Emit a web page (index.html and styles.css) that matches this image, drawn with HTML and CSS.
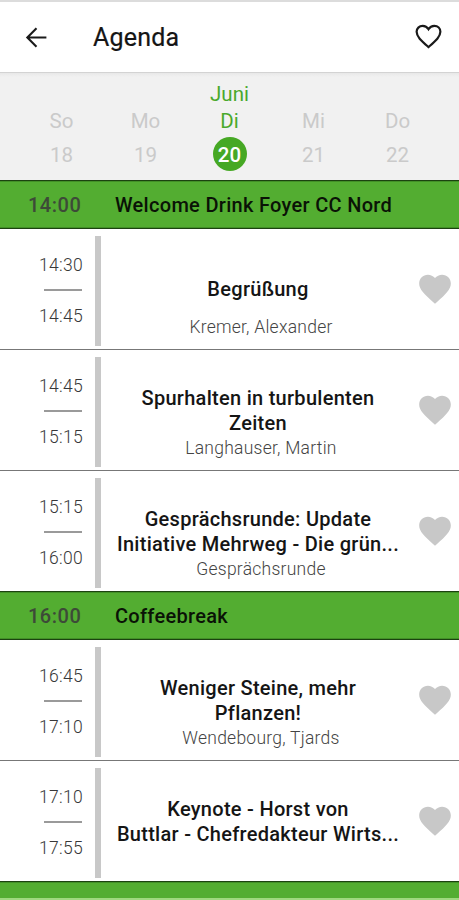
FILE: index.html
```html
<!DOCTYPE html>
<html lang="de">
<head>
<meta charset="UTF-8">
<meta name="viewport" content="width=device-width, initial-scale=1">
<title>Agenda</title>
<link rel="stylesheet" href="styles.css">
</head>
<body>

<svg class="symbole" width="0" height="0">
  <symbol id="herz" viewBox="0 0 24 24">
    <path d="M12 21.35l-1.45-1.32C5.4 15.36 2 12.28 2 8.5 2 5.42 4.42 3 7.5 3c1.74 0 3.41.81 4.5 2.09C13.09 3.81 14.76 3 16.5 3 19.58 3 22 5.42 22 8.5c0 3.78-3.4 6.86-8.55 11.54L12 21.35z"/>
  </symbol>
</svg>

<header class="kopf">
  <svg class="zurueck" viewBox="0 0 24 24"><path d="M21.5 12H3.5M12 3.2L3.2 12l8.8 8.8"/></svg>
  <h1>Agenda</h1>
  <svg class="merken" viewBox="0 0 24 24"><path d="M12 20.2C6.6 15.4 2.8 12.2 2.8 8.4 2.8 5.8 4.8 3.8 7.5 3.8c1.8 0 3.5 1 4.5 2.6 1-1.6 2.7-2.6 4.5-2.6 2.7 0 4.7 2 4.7 4.6 0 3.8-3.8 7-9.2 11.8z"/></svg>
</header>

<nav class="tage">
  <div class="tag"><span>So</span><span class="zahl">18</span></div>
  <div class="tag"><span>Mo</span><span class="zahl">19</span></div>
  <div class="tag aktiv"><span>Juni</span><span>Di</span><span class="zahl">20</span></div>
  <div class="tag"><span>Mi</span><span class="zahl">21</span></div>
  <div class="tag"><span>Do</span><span class="zahl">22</span></div>
</nav>

<main>
  <div class="pause"><time>14:00</time><h2>Welcome Drink Foyer CC Nord</h2></div>

  <div class="termin">
    <div class="zeit"><time>14:30</time><time>14:45</time></div>
    <div class="text einzeilig"><h3>Begrüßung</h3><p>Kremer, Alexander</p></div>
    <svg class="herz"><use href="#herz"/></svg>
  </div>
  <div class="termin">
    <div class="zeit"><time>14:45</time><time>15:15</time></div>
    <div class="text"><h3>Spurhalten in turbulenten<br>Zeiten</h3><p>Langhauser, Martin</p></div>
    <svg class="herz"><use href="#herz"/></svg>
  </div>
  <div class="termin letzter">
    <div class="zeit"><time>15:15</time><time>16:00</time></div>
    <div class="text"><h3>Gesprächsrunde: Update<br>Initiative Mehrweg - Die grün...</h3><p>Gesprächsrunde</p></div>
    <svg class="herz"><use href="#herz"/></svg>
  </div>

  <div class="pause"><time>16:00</time><h2>Coffeebreak</h2></div>

  <div class="termin">
    <div class="zeit"><time>16:45</time><time>17:10</time></div>
    <div class="text"><h3>Weniger Steine, mehr<br>Pflanzen!</h3><p>Wendebourg, Tjards</p></div>
    <svg class="herz"><use href="#herz"/></svg>
  </div>
  <div class="termin letzter">
    <div class="zeit"><time>17:10</time><time>17:55</time></div>
    <div class="text"><h3>Keynote - Horst von<br>Buttlar - Chefredakteur Wirts...</h3></div>
    <svg class="herz"><use href="#herz"/></svg>
  </div>

  <div class="pause"></div>
</main>

<div class="rand"></div>

</body>
</html>
```

FILE: styles.css
```css
* {
  box-sizing: border-box;
}
body {
  margin: 0;
  height: 900px;
  overflow: hidden;
  display: flex;
  flex-direction: column;
  font-family: Roboto, "Liberation Sans", sans-serif;
  background: #fff;
  color: #151515;
}
h1, h2, h3, p {
  margin: 0;
}
.symbole {
  display: block;
  flex: none;
}

/* Kopfzeile */
.kopf {
  flex: none;
  display: flex;
  align-items: center;
  height: 73px;
  padding: 0 15px 0 24px;
  border-top: 2px solid #dcdcdc;
  border-bottom: 1px solid #d3d3d3;
}
.zurueck {
  width: 25px;
  height: 25px;
  fill: none;
  stroke: #1a1a1a;
  stroke-width: 2;
}
h1 {
  flex: 1;
  padding-left: 44px;
  font-size: 25px;
  font-weight: 400;
  letter-spacing: 0.2px;
  -webkit-text-stroke: 0.2px;
}
.merken {
  width: 31px;
  height: 31px;
  margin-top: -2px;
  fill: none;
  stroke: #1a1a1a;
  stroke-width: 1.7;
}

/* Tagesleiste */
.tage {
  flex: none;
  display: grid;
  grid-template-columns: repeat(5, 84px);
  justify-content: center;
  align-items: end;
  height: 107px;
  padding-bottom: 9px;
  background: linear-gradient(#e8e8e8, #f1f1f1 4px);
  color: #cacaca;
  font-size: 20.5px;
}
.tag {
  display: flex;
  flex-direction: column;
  align-items: center;
  line-height: 27px;
}
.zahl {
  width: 34px;
  height: 34px;
  margin-top: 2px;
  line-height: 36px;
  text-align: center;
}
.aktiv {
  color: #4aa92c;
}
.aktiv .zahl {
  border-radius: 50%;
  background: #46a824;
  color: #fff;
  font-weight: 500;
}

/* Programm */
main {
  flex: none;
  height: 718px;
  overflow: hidden;
}
.pause {
  display: flex;
  align-items: center;
  height: 49px;
  padding-left: 28px;
  border-top: 1px solid #1c4210;
  border-bottom: 1px solid #1c4210;
  box-shadow: inset 0 1px #429027, inset 0 -1px #429027;
  background: #53ad31;
}
.pause time {
  width: 87px;
  color: #3d4a38;
  font-size: 20px;
  font-weight: 500;
  letter-spacing: 0.5px;
}
.pause h2 {
  color: #0a1206;
  font-size: 20px;
  font-weight: 500;
  letter-spacing: 0.3px;
}
.termin {
  display: flex;
  height: 121px;
  border-bottom: 1px solid #777;
}
.termin.letzter {
  height: 120px;
  border-bottom: 0;
}
.zeit {
  width: 101px;
  height: 110px;
  margin-top: 7px;
  padding: 14px 12px 0 0;
  border-right: 6px solid #c8c8c8;
  display: flex;
  flex-direction: column;
  align-items: flex-end;
  color: #383838;
  font-size: 17.5px;
  font-weight: 300;
  letter-spacing: 0.3px;
  line-height: 30px;
}
.zeit time + time {
  margin-top: 21px;
}
.zeit time:first-child::after {
  content: "";
  display: block;
  width: 38px;
  height: 2px;
  margin: 9px 1px -11px auto;
  background: #9a9a9a;
}
.text {
  width: 313px;
  padding: 36px 0 0 1px;
  text-align: center;
}
.text h3 {
  font-size: 20px;
  font-weight: 500;
  letter-spacing: 0.28px;
  line-height: 24.5px;
  white-space: nowrap;
}
.text p {
  padding-left: 6px;
  color: #444;
  font-size: 17.5px;
  font-weight: 300;
  letter-spacing: 0.25px;
  line-height: 27px;
}
.text.einzeilig {
  padding-top: 48px;
}
.einzeilig p {
  margin-top: 12px;
}
.herz {
  width: 38px;
  height: 38px;
  margin-top: 41px;
  margin-left: 2px;
  fill: #c8c8c8;
}
.rand {
  flex: none;
  height: 2px;
  background: #9fd87f;
}
```
